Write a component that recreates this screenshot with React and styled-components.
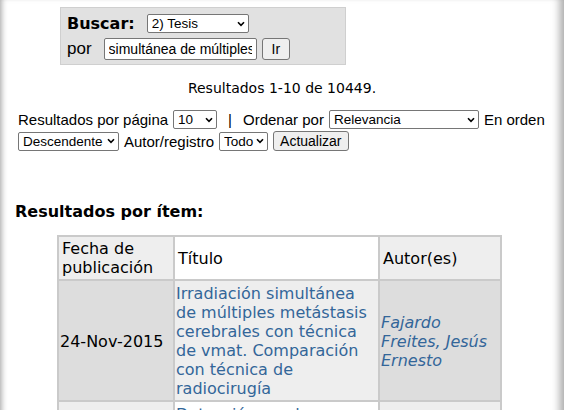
import React from "react";
import styled, { createGlobalStyle } from "styled-components";

const GlobalStyle = createGlobalStyle`
  html, body {
    margin: 0;
    padding: 0;
    background: #fff;
  }
  body {
    font-family: "DejaVu Sans", Verdana, sans-serif;
    color: #000;
  }
`;

const Page = styled.div`
  position: relative;
  min-height: 410px;
  padding: 7px 0 0 15px;
  box-sizing: border-box;
  overflow: hidden;
  box-shadow: inset 6px 0 6px -5px #9a9a9a, inset -10px 0 8px -6px #a8a8a8;
`;

const SearchBox = styled.form`
  width: 272px;
  margin-left: 45px;
  padding: 6px 6px 4px;
  background: #e1e1e1;
  border: 1px solid #cfcfcf;
  display: flex;
  flex-direction: column;
  gap: 5px;
`;

const SearchRow = styled.div`
  display: flex;
  align-items: center;
  gap: ${(p) => p.$gap || 5}px;
`;

const SearchLabel = styled.label`
  font-family: "DejaVu Sans", Verdana, sans-serif;
  font-weight: bold;
  font-size: 16px;
  margin-right: 7px;
`;

const PorLabel = styled.label`
  font-family: "Liberation Sans", Arial, sans-serif;
  font-size: 17px;
  margin-right: 7px;
`;

const SelectWrap = styled.span`
  position: relative;
  display: inline-block;
  width: ${(p) => p.$w}px;
  height: ${(p) => p.$h || 19}px;
`;

const Select = styled.select`
  appearance: none;
  -webkit-appearance: none;
  font-family: "Liberation Sans", Arial, sans-serif;
  font-size: 13.5px;
  width: 100%;
  height: 100%;
  padding: 0 12px 0 4px;
  margin: 0;
  border: 1px solid #767676;
  border-radius: 2px;
  background: #fff;
  color: #000;
  box-sizing: border-box;
  display: block;
`;

const Chevron = styled.svg`
  position: absolute;
  right: 4px;
  top: 50%;
  margin-top: -3px;
  width: 8px;
  height: 6px;
  pointer-events: none;
`;

const Dropdown = ({ w, h, children }) => (
  <SelectWrap $w={w} $h={h}>
    <Select>{children}</Select>
    <Chevron viewBox="0 0 8 6">
      <path d="M1 1.2 L4 4.3 L7 1.2" fill="none" stroke="#000" strokeWidth="1.6" />
    </Chevron>
  </SelectWrap>
);

const TextInput = styled.input`
  font-family: "Liberation Sans", Arial, sans-serif;
  font-size: 14px;
  width: 153px;
  height: 22px;
  padding: 1px 4px;
  border: 1px solid #767676;
  border-radius: 2px;
  box-sizing: border-box;
  color: #000;
  outline: none;
`;

const Button = styled.button`
  font-family: "Liberation Sans", Arial, sans-serif;
  font-size: 14px;
  height: ${(p) => p.$h || 21}px;
  padding: 0 ${(p) => p.$px || 7}px;
  border: 1px solid #767676;
  border-radius: 3px;
  background: #efefef;
  color: #000;
  box-sizing: border-box;
`;

const Summary = styled.p`
  margin: 15px 0 0;
  width: 534px;
  text-align: center;
  font-size: 14px;
`;

const Controls = styled.div`
  margin: 14px 0 0 3px;
  font-family: "Liberation Sans", Arial, sans-serif;
  font-size: 15px;
  display: flex;
  flex-wrap: wrap;
  align-items: center;
  width: 530px;
  column-gap: 5px;
  row-gap: 2px;
`;

const Sep = styled.span`
  padding: 0 6px;
`;

const Heading = styled.h3`
  margin: 51px 0 0;
  font-size: 16px;
  font-weight: bold;
`;

const ResultsTable = styled.table`
  margin: 14px 0 0 42px;
  border-collapse: separate;
  border-spacing: 0;
  table-layout: fixed;
  width: 444px;
  background: #cacaca;
  border: 1px solid #cacaca;
  font-size: 16px;
  line-height: 19px;
`;

const Cell = styled.td`
  background: ${(p) => p.$bg};
  border: 1px solid #cacaca;
  padding: 3px 1px 2px;
  vertical-align: ${(p) => (p.$top ? "top" : "middle")};
  text-align: left;
  box-sizing: border-box;
`;

const Head = styled(Cell).attrs({ as: "th" })`
  font-weight: normal;
  height: 44px;
  padding: 2px 3px;
`;

const Link = styled.a`
  color: #336699;
  text-decoration: none;
  font-style: ${(p) => (p.$italic ? "italic" : "normal")};
`;

const rows = [
  {
    date: "24-Nov-2015",
    title:
      "Irradiación simultánea de múltiples metástasis cerebrales con técnica de vmat. Comparación con técnica de radiocirugía",
    author: "Fajardo Freites, Jesús Ernesto",
    shade: ["#dddddd", "#eeeeee", "#dddddd"],
  },
  {
    date: "",
    title: "Detección y valor pronóstico de la enfermedad",
    author: "",
    shade: ["#eeeeee", "#ffffff", "#eeeeee"],
  },
];

export default function App() {
  return (
    <>
      <GlobalStyle />
      <Page>
        <SearchBox onSubmit={(e) => e.preventDefault()}>
          <SearchRow>
            <SearchLabel>Buscar:</SearchLabel>
            <Dropdown w={102}>
              <option>2) Tesis</option>
            </Dropdown>
          </SearchRow>
          <SearchRow>
            <PorLabel>por</PorLabel>
            <TextInput defaultValue="simultánea de múltiples metástasis" />
            <Button $h={22} $px={9}>Ir</Button>
          </SearchRow>
        </SearchBox>

        <Summary>Resultados 1-10 de 10449.</Summary>

        <Controls>
          <span>Resultados por página</span>
          <Dropdown w={44}>
            <option>10</option>
          </Dropdown>
          <Sep>|</Sep>
          <span>Ordenar por</span>
          <Dropdown w={150}>
            <option>Relevancia</option>
          </Dropdown>
          <span>En orden</span>
          <Dropdown w={101}>
            <option>Descendente</option>
          </Dropdown>
          <span>Autor/registro</span>
          <Dropdown w={49}>
            <option>Todo</option>
          </Dropdown>
          <Button $h={20} $px={6}>Actualizar</Button>
        </Controls>

        <Heading>Resultados por ítem:</Heading>

        <ResultsTable>
          <colgroup>
            <col style={{ width: 116 }} />
            <col style={{ width: 205 }} />
            <col style={{ width: 122 }} />
          </colgroup>
          <thead>
            <tr>
              <Head $bg="#eeeeee">Fecha de publicación</Head>
              <Head $bg="#ffffff">Título</Head>
              <Head $bg="#eeeeee">Autor(es)</Head>
            </tr>
          </thead>
          <tbody>
            {rows.map((r, i) => (
              <tr key={i}>
                <Cell $bg={r.shade[0]}>{r.date}</Cell>
                <Cell $bg={r.shade[1]} $top>
                  <Link href="#">{r.title}</Link>
                </Cell>
                <Cell $bg={r.shade[2]}>
                  <Link href="#" $italic>{r.author}</Link>
                </Cell>
              </tr>
            ))}
          </tbody>
        </ResultsTable>
      </Page>
    </>
  );
}
